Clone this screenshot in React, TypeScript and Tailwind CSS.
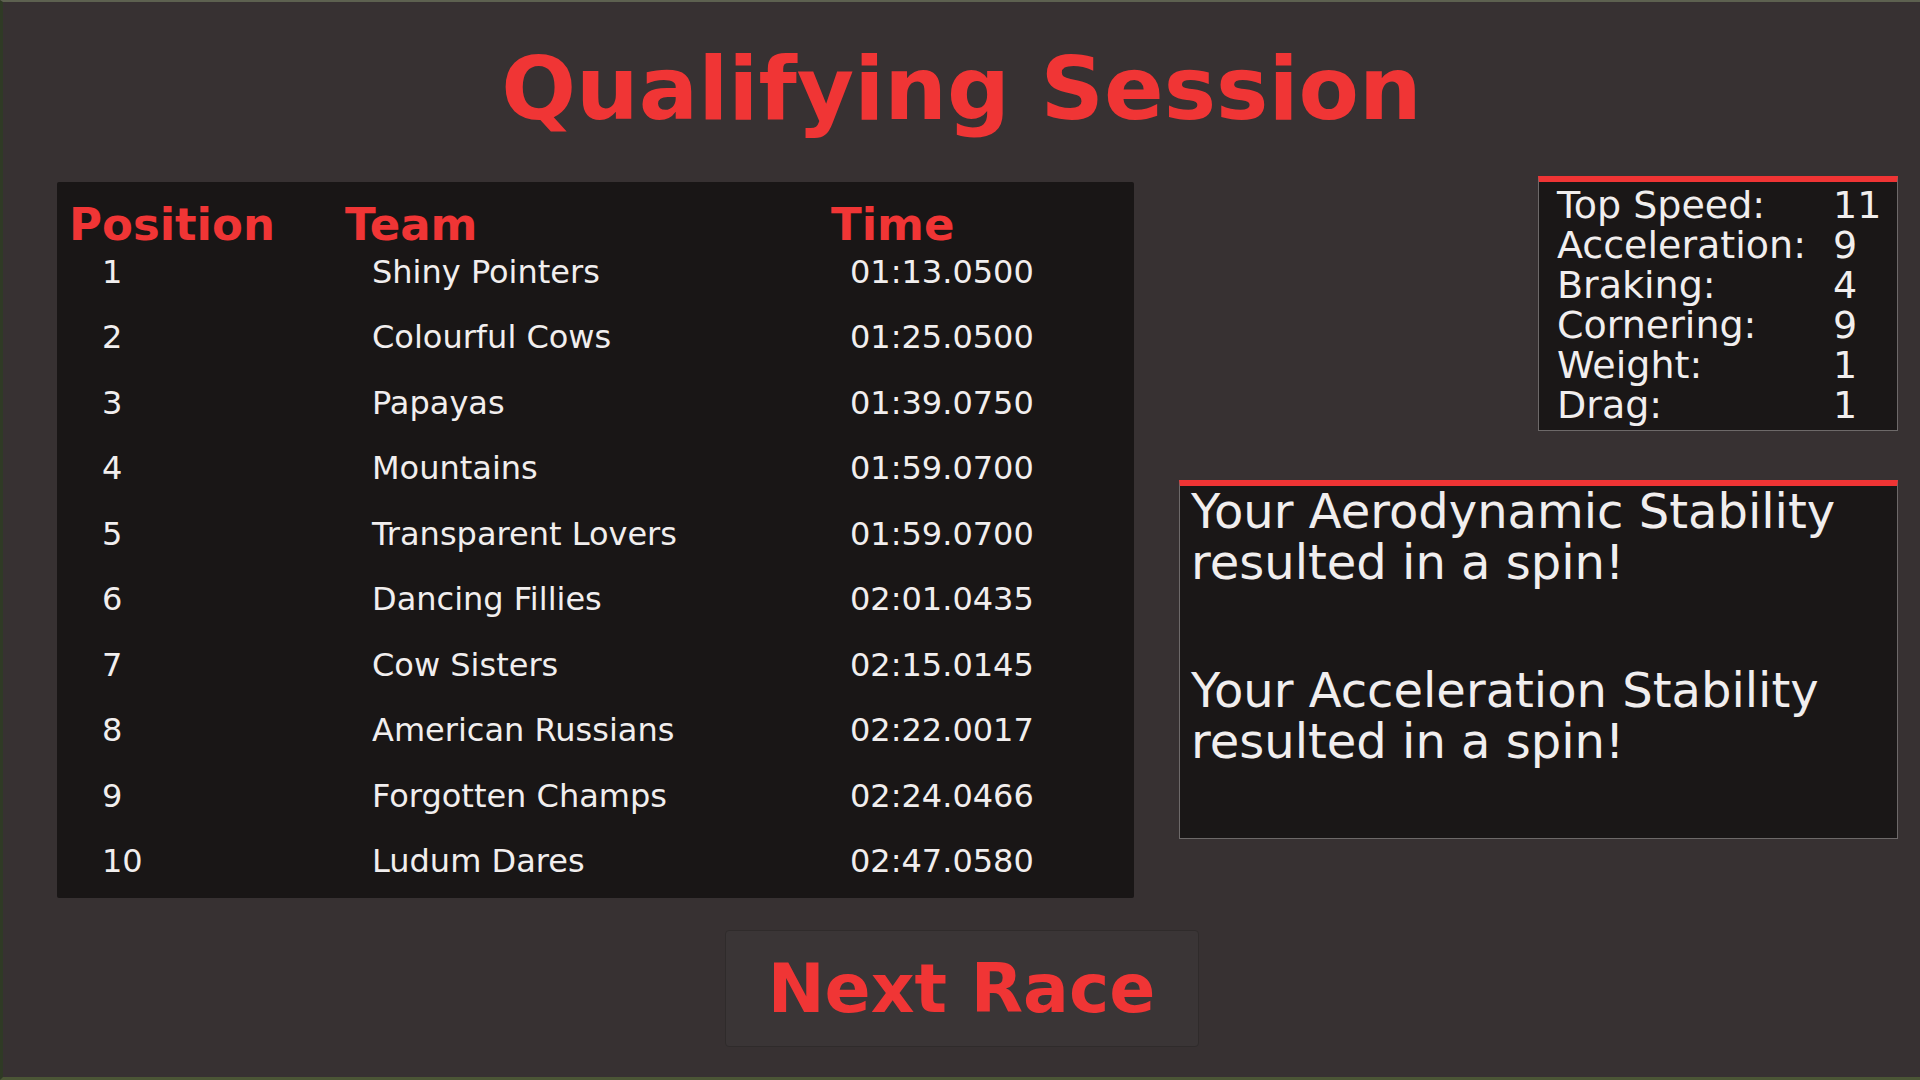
import React from 'react';

const results = [
    { pos: 1, team: 'Shiny Pointers', time: '01:13.0500' },
    { pos: 2, team: 'Colourful Cows', time: '01:25.0500' },
    { pos: 3, team: 'Papayas', time: '01:39.0750' },
    { pos: 4, team: 'Mountains', time: '01:59.0700' },
    { pos: 5, team: 'Transparent Lovers', time: '01:59.0700' },
    { pos: 6, team: 'Dancing Fillies', time: '02:01.0435' },
    { pos: 7, team: 'Cow Sisters', time: '02:15.0145' },
    { pos: 8, team: 'American Russians', time: '02:22.0017' },
    { pos: 9, team: 'Forgotten Champs', time: '02:24.0466' },
    { pos: 10, team: 'Ludum Dares', time: '02:47.0580' },
];

const stats = [
    { label: 'Top Speed:', value: 11 },
    { label: 'Acceleration:', value: 9 },
    { label: 'Braking:', value: 4 },
    { label: 'Cornering:', value: 9 },
    { label: 'Weight:', value: 1 },
    { label: 'Drag:', value: 1 },
];

const App: React.FC = () => {
    return (
        <div className="w-[1920px] h-[1080px] overflow-hidden bg-[#373132] border-t-2 border-t-[#5d6150] border-l-[3px] border-l-[#2f3a25] border-b-[3px] border-b-[#4b5636] font-['DejaVu_Sans',sans-serif] text-[#f1eeee]">
            {/* title */}
            <div className="h-[174px] flex items-center justify-center">
                <h1 className="text-[88px] leading-none font-bold text-[#f03535]">Qualifying Session</h1>
            </div>

            <div className="flex items-start">
                {/* results table */}
                <div className="ml-[54px] mt-[6px] w-[1077px] h-[716px] bg-[#191616] rounded-[2px]">
                    <div className="h-[57px] pt-[20px] pl-[12px] flex text-[45px] leading-none font-bold text-[#f03535]">
                        <span className="w-[276px]">Position</span>
                        <span className="w-[486px]">Team</span>
                        <span>Time</span>
                    </div>
                    {results.map(r => (
                        <div key={r.pos} className="h-[65.5px] pl-[45px] flex items-center text-[32px] leading-none">
                            <span className="w-[270px]">{r.pos}</span>
                            <span className="w-[478px]">{r.team}</span>
                            <span>{r.time}</span>
                        </div>
                    ))}
                </div>

                {/* right column */}
                <div className="ml-[45px] w-[719px] flex flex-col items-end">
                    <div className="w-[360px] h-[255px] bg-[#1a1717] border-t-[6px] border-t-[#ef3434] border-x border-b border-[#6d6969] pt-[3px] pl-[18px]">
                        {stats.map(s => (
                            <div key={s.label} className="h-[40px] flex items-center text-[38px] leading-none">
                                <span className="w-[276px]">{s.label}</span>
                                <span>{s.value}</span>
                            </div>
                        ))}
                    </div>
                    <div className="mt-[49px] w-[719px] h-[359px] bg-[#1a1717] border-t-[6px] border-t-[#ef3434] border-x border-b border-[#6d6969] pl-[11px] text-[48px] leading-[51px]">
                        <p>Your Aerodynamic Stability<br />resulted in a spin!</p>
                        <p className="mt-[77px]">Your Acceleration Stability<br />resulted in a spin!</p>
                    </div>
                </div>
            </div>

            {/* next race */}
            <div className="mt-[32px] flex justify-center">
                <button className="w-[474px] h-[117px] bg-[#3a3536] border border-[#2f2b2b] rounded-[4px] flex items-center justify-center text-[68px] leading-none font-bold text-[#f03535]">
                    Next Race
                </button>
            </div>
        </div>
    );
};

export default App;
